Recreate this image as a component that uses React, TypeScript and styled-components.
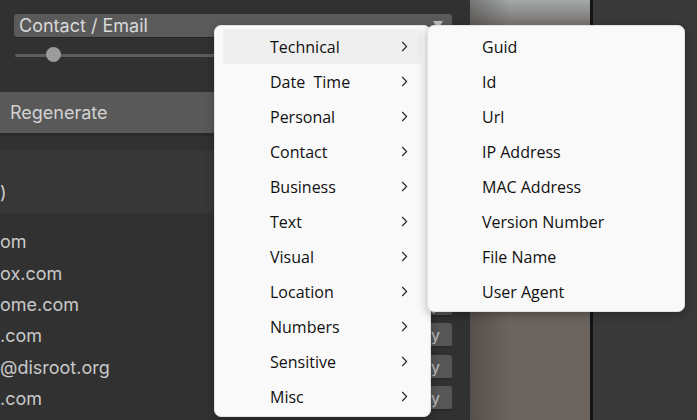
import React from "react";
import styled, { createGlobalStyle } from "styled-components";

const GlobalStyle = createGlobalStyle`
  html, body {
    margin: 0;
    padding: 0;
    background: #333333;
    overflow: hidden;
  }
`;

const categories = [
  "Technical",
  "Date  Time",
  "Personal",
  "Contact",
  "Business",
  "Text",
  "Visual",
  "Location",
  "Numbers",
  "Sensitive",
  "Misc",
];

const technical = [
  "Guid",
  "Id",
  "Url",
  "IP Address",
  "MAC Address",
  "Version Number",
  "File Name",
  "User Agent",
];

const emails = ["om", "ox.com", "ome.com", ".com", "@disroot.org", ".com"];

const Chevron = () => (
  <svg width="7" height="11" viewBox="0 0 7 11">
    <polyline
      points="1.2,1 5.6,5.5 1.2,10"
      fill="none"
      stroke="#2b2b2b"
      strokeWidth="1.2"
    />
  </svg>
);

const App = () => {
  return (
    <Page>
      <GlobalStyle />
      <LeftPanel>
        <Select>
          Contact / Email
          <Arrow />
        </Select>
        <SliderRow>
          <Track />
          <Thumb />
        </SliderRow>
        <Regenerate>Regenerate</Regenerate>
        <Header>)</Header>
        <List>
          {emails.map((e, i) => (
            <Row key={i}>
              <Email>{e}</Email>
              <CopyButton>Copy</CopyButton>
            </Row>
          ))}
        </List>
      </LeftPanel>
      <ImageStrip />
      <Divider />
      <RightPanel />

      <Menu $left={214} $width={217}>
        {categories.map((c, i) => (
          <Item key={c} $active={i === 0}>
            <Label>{c}</Label>
            <Chevron />
          </Item>
        ))}
      </Menu>
      <Menu $left={427} $width={258}>
        {technical.map((t) => (
          <Item key={t}>
            <Label $indent={46}>{t}</Label>
          </Item>
        ))}
      </Menu>
    </Page>
  );
};

export default App;

const Page = styled.div`
  position: relative;
  width: 697px;
  height: 420px;
  display: flex;
  overflow: hidden;
  font-family: Inter, "Noto Sans", sans-serif;
`;

const LeftPanel = styled.div`
  width: 470px;
  height: 100%;
  background: #313131;
  display: flex;
  flex-direction: column;
`;

const Select = styled.div`
  position: relative;
  margin: 14px 18px 0 14px;
  height: 23px;
  line-height: 23px;
  padding-left: 5px;
  background: #5a5a5a;
  border-radius: 3px;
  box-shadow: 0 1px 0 #262626;
  color: #d9d9d9;
  font-size: 18px;
`;

const Arrow = styled.span`
  position: absolute;
  right: 9px;
  top: 7px;
  width: 0;
  height: 0;
  border-left: 5px solid transparent;
  border-right: 5px solid transparent;
  border-top: 8px solid #bdbdbd;
`;

const SliderRow = styled.div`
  position: relative;
  margin: 10px 18px 0 15px;
  height: 16px;
  display: flex;
  align-items: center;
`;

const Track = styled.div`
  flex: 1;
  height: 3px;
  background: #5d5d5d;
  border-radius: 2px;
`;

const Thumb = styled.div`
  position: absolute;
  left: 31px;
  top: 0;
  width: 15px;
  height: 15px;
  border-radius: 50%;
  background: #9b9b9b;
`;

const Regenerate = styled.div`
  margin: 29px 18px 0 0;
  height: 41px;
  line-height: 41px;
  padding-left: 10px;
  background: #595959;
  border-bottom: 3px solid #2a2a2a;
  color: #d2d2d2;
  font-size: 18px;
`;

const Header = styled.div`
  margin: 14px 18px 0 0;
  height: 63px;
  box-sizing: border-box;
  padding-bottom: 10px;
  display: flex;
  align-items: flex-end;
  background: #373737;
  color: #cfcfcf;
  font-size: 18px;
`;

const List = styled.div`
  display: flex;
  flex-direction: column;
  padding: 13px 18px 0 0;
`;

const Row = styled.div`
  height: 31.4px;
  display: flex;
  align-items: center;
  justify-content: space-between;
`;

const Email = styled.span`
  color: #c9c9c9;
  font-size: 18px;
`;

const CopyButton = styled.div`
  width: 64px;
  height: 25px;
  line-height: 25px;
  text-align: center;
  box-sizing: border-box;
  background: #565656;
  border-radius: 3px;
  border-bottom: 2px solid #2a2a2a;
  color: #bdbdbd;
  font-size: 16px;
`;

const ImageStrip = styled.div`
  width: 120px;
  height: 100%;
  background: linear-gradient(
      to right,
      rgba(60, 56, 54, 0.45) 0,
      rgba(60, 56, 54, 0) 40px
    ),
    linear-gradient(to bottom, #a3a9a9 0, #7b7674 22px, #6d6662 60px, #6b635d 100%);
`;

const Divider = styled.div`
  width: 3px;
  height: 100%;
  background: #141414;
`;

const RightPanel = styled.div`
  flex: 1;
  height: 100%;
  background: #393939;
`;

const Menu = styled.div<{ $left: number; $width: number }>`
  position: absolute;
  top: 25px;
  left: ${(p) => p.$left}px;
  width: ${(p) => p.$width}px;
  box-sizing: border-box;
  padding: 3px 8px 2px 8px;
  background: #f9f9f9;
  border: 1px solid #e2e2e2;
  border-radius: 7px;
  box-shadow: 0 3px 10px rgba(0, 0, 0, 0.28);
  display: flex;
  flex-direction: column;
  font-family: "Segoe UI", "Open Sans", "Noto Sans", sans-serif;
`;

const Item = styled.div<{ $active?: boolean }>`
  height: 35px;
  display: flex;
  align-items: center;
  justify-content: space-between;
  padding-right: 14px;
  border-radius: 4px;
  background: ${(p) => (p.$active ? "#efefef" : "transparent")};
`;

const Label = styled.span<{ $indent?: number }>`
  padding-left: ${(p) => p.$indent ?? 47}px;
  color: #111111;
  font-size: 16px;
  white-space: pre;
`;
